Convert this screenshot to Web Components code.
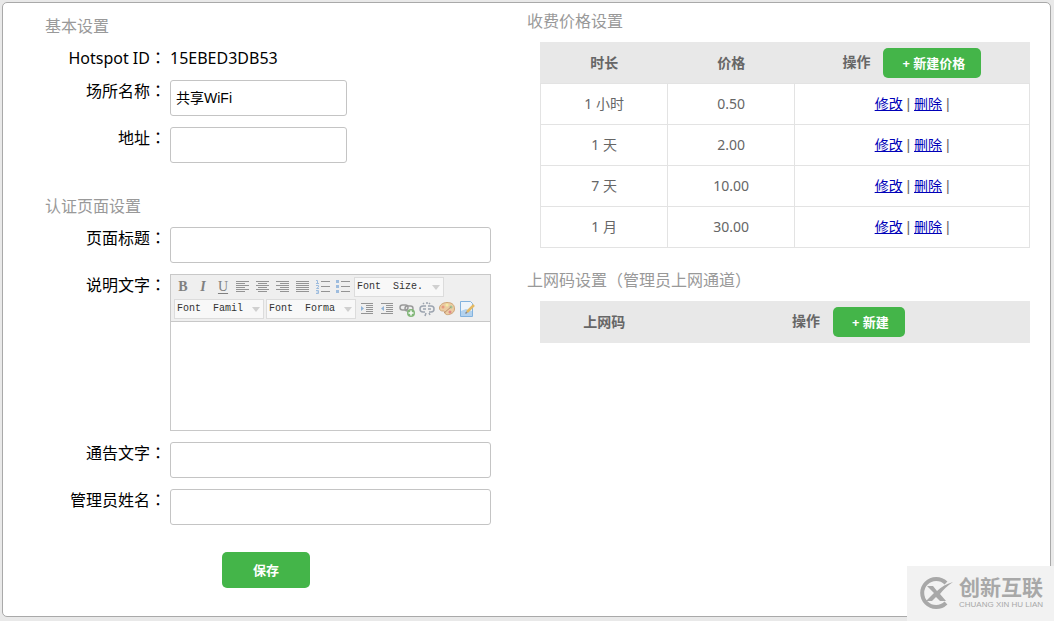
<!DOCTYPE html>
<html lang="zh-CN">
<head>
<meta charset="utf-8">
<title>Hotspot 设置</title>
<style>
html{height:100%}
body{margin:0;min-height:100%;display:flex;background:#e9e9e9;color:#000;font:16px/22px "Noto Sans","Noto Sans CJK SC",sans-serif}
</style>
</head>
<body>
<app-panel>
  <div slot="left">
    <settings-section heading="基本设置">
      <field-row label="Hotspot ID" type="static" value="15EBED3DB53"></field-row>
      <field-row label="场所名称" value="共享WiFi" size="short"></field-row>
      <field-row label="地址" size="short"></field-row>
    </settings-section>
    <settings-section heading="认证页面设置">
      <field-row label="页面标题"></field-row>
      <rich-field label="说明文字"></rich-field>
      <field-row label="通告文字"></field-row>
      <field-row label="管理员姓名"></field-row>
    </settings-section>
    <green-button class="save" size="large">保存</green-button>
  </div>
  <div slot="right">
    <settings-section heading="收费价格设置" indent>
      <price-table></price-table>
    </settings-section>
    <settings-section heading="上网码设置（管理员上网通道）" indent>
      <code-table></code-table>
    </settings-section>
  </div>
</app-panel>
<brand-mark></brand-mark>

<script>
class Base extends HTMLElement {
  connectedCallback() {
    if (this.shadowRoot) return;
    this.attachShadow({ mode: 'open' }).innerHTML =
      `<style>*{box-sizing:border-box}${this.css()}</style>${this.html()}`;
  }
}

class AppPanel extends Base {
  css() { return `
    :host{display:block;flex:1;margin:2px 3px 4px 2px;box-sizing:border-box;border:1px solid #a9a9a9;border-radius:5px;background:#fff}
    main{display:grid;grid-template-columns:minmax(0,482fr) minmax(0,503fr);padding:7px 20px 28px 42px}
    .left{padding-top:5px}
    ::slotted(div){display:flex;flex-direction:column}
    .left ::slotted(div){gap:32px}
    .right ::slotted(div){gap:21px}`; }
  html() { return `<main><div class="left"><slot name="left"></slot></div><div class="right"><slot name="right"></slot></div></main>`; }
}

class SettingsSection extends Base {
  css() { return `
    :host{display:block}
    h2{margin:0 0 10px;font-size:16px;line-height:22px;font-weight:400;color:#999}
    .body{display:flex;flex-direction:column;gap:11px}
    :host([indent]) .body{padding-left:13px}`; }
  html() { return `<h2>${this.getAttribute('heading')}</h2><div class="body"><slot></slot></div>`; }
}

class FieldRow extends Base {
  css() { return `
    :host{display:grid;grid-template-columns:121px minmax(0,321px);gap:4px}
    .label{text-align:right;white-space:nowrap}
    .colon{font-family:"Noto Sans CJK TC",sans-serif;line-height:0}
    input{display:block;width:100%;height:36px;padding:0 5px 2px;border:1px solid #c4c4c4;border-radius:3px;background:#fff;color:#000;font:14px/20px "Liberation Sans","Noto Sans CJK SC",sans-serif}
    :host([size=short]) input{max-width:177px}`; }
  html() {
    const colon = '<span class="colon" lang="zh-TW">：</span>';
    const text = this.getAttribute('label');
    if (this.getAttribute('type') === 'static')
      return `<span class="label">${text}${colon}</span><span>${this.getAttribute('value')}</span>`;
    return `<label class="label" for="c">${text}${colon}</label>${this.control()}`;
  }
  control() { return `<input id="c" type="text" value="${this.getAttribute('value') || ''}">`; }
}

const lines = (rows) => `<path stroke="#858585" d="${rows.map(([x, y, w]) => `M${x} ${y}.5h${w}`).join('')}"/>`;
const tool = (name, art) => `<button type="button" aria-label="${name}"><svg width="16" height="16" viewBox="0 0 16 16" fill="none">${art}</svg></button>`;
const letter = (name, tag, ch) => `<button type="button" aria-label="${name}"><${tag}>${ch}</${tag}></button>`;
const picker = (name, text) => `<span class="pick"><select aria-label="${name}"><option>${text}</option></select></span>`;

class RichField extends FieldRow {
  css() { return super.css() + `
    .editor{border:1px solid #c8c8c8}
    .bar{display:flex;flex-wrap:wrap;padding:1px 2px;background:#efefef;border-bottom:1px solid #c8c8c8}
    button{display:flex;align-items:center;justify-content:center;width:20px;height:22px;padding:0;border:0;background:none;color:#808080;font:14px/20px "Liberation Serif",serif}
    svg{opacity:.85}
    u{text-underline-offset:2px}
    .pick{position:relative;display:block;margin:1px}
    .pick::after{content:"";position:absolute;right:4px;top:8px;width:8px;height:5px;background:#d0d0d0;clip-path:polygon(0 0,100% 0,50% 100%);pointer-events:none}
    select{display:block;appearance:none;width:90px;height:20px;padding:0 0 0 2px;border:1px solid #dcdcdc;border-radius:0;background:#f8f8f8;color:#333;font:10px/18px "Liberation Mono",monospace}
    textarea{display:block;width:100%;height:108px;padding:5px;border:0;resize:none;background:#fff;outline:0;font:14px/20px "Liberation Sans","Noto Sans CJK SC",sans-serif}`; }
  control() {
    const W = 13;
    const al = (x) => lines([[1,2,W],[x,4,9],[1,6,W],[x,8,9],[1,10,W],[x,12,9]]);
    const list = (mark) => mark + lines([[6,2,9],[6,7,9],[6,12,9]]);
    const dent = (arrow) => lines([[2,2,12],[7,4,7],[7,6,7],[7,8,7],[7,10,7],[2,12,12]]) + `<path fill="#7fa9d4" d="${arrow}"/>`;
    return `<div class="editor"><div class="bar">
      ${letter('Bold','b','B')}${letter('Italic','i','<b>I</b>')}${letter('Underline','u','U')}
      ${tool('Align left', al(1))}${tool('Align center', al(3))}${tool('Align right', al(5))}
      ${tool('Justify', lines([[1,2,W],[1,4,W],[1,6,W],[1,8,W],[1,10,W],[1,12,W]]))}
      ${tool('Ordered list', list('<path stroke="#8fb4dc" d="M1 1.5h1.5v3M1 4.5h3M1 6.500h2.500v1.500l-2 1.500h2.500M1 11.500h2.500v3H1M1.500 13h2"/>'))}
      ${tool('Unordered list', list('<path fill="#8fb4dc" d="M1 1h3v3H1zM1 6h3v3H1zM1 11h3v3H1z"/>'))}
      ${picker('Font size','Font&nbsp; Size.')}${picker('Font family','Font&nbsp; Famil')}${picker('Font format','Font&nbsp; Forma')}
      ${tool('Outdent', dent('M2 5l3 2.500-3 2.500z'))}${tool('Indent', dent('M5 5l-3 2.500 3 2.500z'))}
      ${tool('Link', '<g stroke="#8c8c8c" stroke-width="1.500"><rect x="1" y="4" width="8" height="5" rx="2.500"/><rect x="6" y="5" width="8" height="5" rx="2.500"/></g><circle cx="12" cy="12" r="4" fill="#6fae64"/><path stroke="#fff" stroke-width="1.500" d="M12 9.500v5M9.500 12h5"/>')}
      ${tool('Unlink', '<g stroke="#8f98a5" stroke-width="1.500"><path d="M7 5H4a2.500 2.500 0 000 6h2M9 5h3a2.500 2.500 0 010 6h-2M4 8h3M9 8h3"/><path d="M8 1v2M4 2l1 1M11 2l-1 1M7 12l-1 3M10 12l1 2"/></g>')}
      ${tool('Color', '<path fill="#ecc796" stroke="#c99a63" d="M8 1.500C4 1.500.500 4 .500 7S3 10 4.500 10s1 1.500 2 3 9 .500 9-5-4-6.500-7.500-6.500z"/><circle cx="4" cy="6" r="1.500" fill="#e58c6c"/><circle cx="8" cy="4" r="1.500" fill="#f3ec9a"/><circle cx="12" cy="6" r="1.500" fill="#8fc08a"/><circle cx="11" cy="11" r="1.500" fill="#d77"/><path stroke="#b5805a" d="M5 12l7-6"/>')}
      ${tool('Edit HTML', '<path fill="#eef6fd" stroke="#6fa8dc" d="M1.500.500h10l2 2v13h-12z"/><path fill="#a9cdee" d="M2 10l5-2 6 2v5H2z"/><path stroke="#e3b04b" stroke-width="2.500" d="M15 4l-7 7"/><path stroke="#777" stroke-width="1.500" d="M8 11l-1.500 1.500"/>')}
      </div><textarea id="c"></textarea></div>`;
  }
}

class GreenButton extends Base {
  css() { return `
    :host{display:inline-block;vertical-align:middle}
    :host(.save){margin:-5px 0 0 177px}
    button{display:block;height:30px;padding:0 16px 0 19px;border:0;border-radius:5px;background:#44b549;color:#fff;font:bold 13px/20px "Noto Sans","Noto Sans CJK SC",sans-serif;white-space:nowrap}
    :host([size=large]) button{height:36px;width:88px;padding:0}`; }
  html() { return `<button type="button"><slot></slot></button>`; }
}

const tableCss = `
  :host{display:block}
  table{width:100%;border-collapse:collapse;table-layout:fixed;color:#666;font-size:14px;line-height:20px;text-align:center}
  th{height:41px;padding:0;background:#e8e8e8;font-weight:700}
  thead{border:1px solid #e8e8e8}
  td{height:41px;padding:0;border:1px solid #e3e3e3}
  .a{width:26%}
  green-button{margin-left:13px}`;

class PriceTable extends Base {
  css() { return tableCss + `
    .act{font-family:"Liberation Sans","Noto Sans CJK SC",sans-serif}
    a{color:#0000b8}`; }
  html() {
    const rows = [['1 小时','0.50'],['1 天','2.00'],['7 天','10.00'],['1 月','30.00']];
    return `<table><thead><tr><th class="a">时长</th><th class="a">价格</th><th>操作<green-button>+ 新建价格</green-button></th></tr></thead><tbody>${
      rows.map(([t, p]) => `<tr><td>${t}</td><td>${p}</td><td class="act"><a href="#">修改</a> | <a href="#">删除</a> |</td></tr>`).join('')
    }</tbody></table>`;
  }
}

class CodeTable extends Base {
  css() { return tableCss; }
  html() { return `<table><thead><tr><th class="a">上网码</th><th>操作<green-button>+ 新建</green-button></th></tr></thead></table>`; }
}

class BrandMark extends Base {
  css() { return `
    :host{position:absolute;right:0;bottom:0;display:flex;align-items:center;gap:5px;box-sizing:border-box;width:147px;height:55px;padding:0 0 2px 11px;background:#f2f2f2;color:#a8a8a8}
    svg{flex:none}
    .t{white-space:nowrap}
    .cn{display:block;font:bold 21px/24px "Liberation Sans","Noto Sans CJK SC",sans-serif}
    .en{display:block;font:8px/10px "Liberation Sans",sans-serif}`; }
  html() { return `
    <svg width="36" height="34" viewBox="0 0 36 34" fill="none"><path stroke="#a8a8a8" stroke-width="4" d="M28 7A14 14 0 1 0 28 27"/><path fill="#a8a8a8" d="M9 10h6l4 5c4-4 9-7 16-9-6 4-10 8-13 12l6 7h-6l-4-4-4 4H8l8-8z"/></svg>
    <span class="t"><span class="cn">创新互联</span><span class="en">CHUANG XIN HU LIAN</span></span>`; }
}

customElements.define('green-button', GreenButton);
customElements.define('field-row', FieldRow);
customElements.define('rich-field', RichField);
customElements.define('price-table', PriceTable);
customElements.define('code-table', CodeTable);
customElements.define('settings-section', SettingsSection);
customElements.define('app-panel', AppPanel);
customElements.define('brand-mark', BrandMark);
</script>
</body>
</html>
